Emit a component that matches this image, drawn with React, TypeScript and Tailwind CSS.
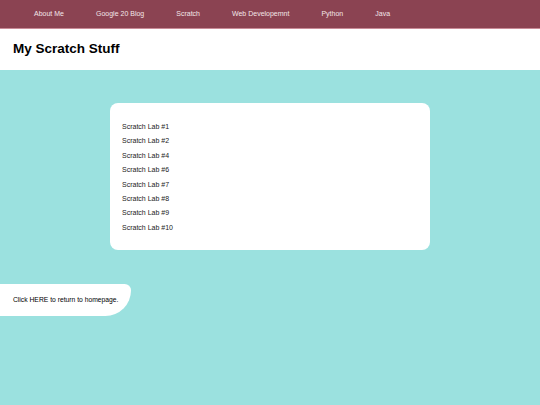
export default function App() {
  const navItems = ["About Me", "Google 20 Blog", "Scratch", "Web Developemnt", "Python", "Java"]
  const labs = ["#1", "#2", "#4", "#6", "#7", "#8", "#9", "#10"]

  return (
    <div className="min-h-[405px] bg-[#9be1df] font-['Liberation_Sans',Arial,sans-serif]">
      {/* Nav bar */}
      <nav className="h-[29px] bg-[#8b4352] border-b border-[#c98b97] flex items-center pl-[34px] gap-[32px]">
        {navItems.map((item) => (
          <a key={item} href="#" className="text-[7px] text-[#f3e6e8]">
            {item}
          </a>
        ))}
      </nav>

      {/* Header */}
      <header className="h-[41px] bg-white flex items-center pl-[13px]">
        <h1 className="text-[13.5px] font-bold text-black">My Scratch Stuff</h1>
      </header>

      {/* Lab list */}
      <div className="pt-[33px] pl-[110px]">
        <div className="w-[320px] h-[147px] bg-white rounded-[8px] pt-[17px] pl-[12px]">
          <ul className="flex flex-col">
            {labs.map((n) => (
              <li key={n} className="h-[14.4px] leading-[14.4px] text-[7px] text-[#222]">
                Scratch Lab {n}
              </li>
            ))}
          </ul>
        </div>
      </div>

      {/* Return link */}
      <div className="mt-[34px] w-[131px] h-[32px] bg-white rounded-tr-[8px] rounded-br-[32px] flex items-center pl-[13px]">
        <a href="#" className="text-[6.75px] text-black">
          Click HERE to return to homepage.
        </a>
      </div>
    </div>
  )
}
